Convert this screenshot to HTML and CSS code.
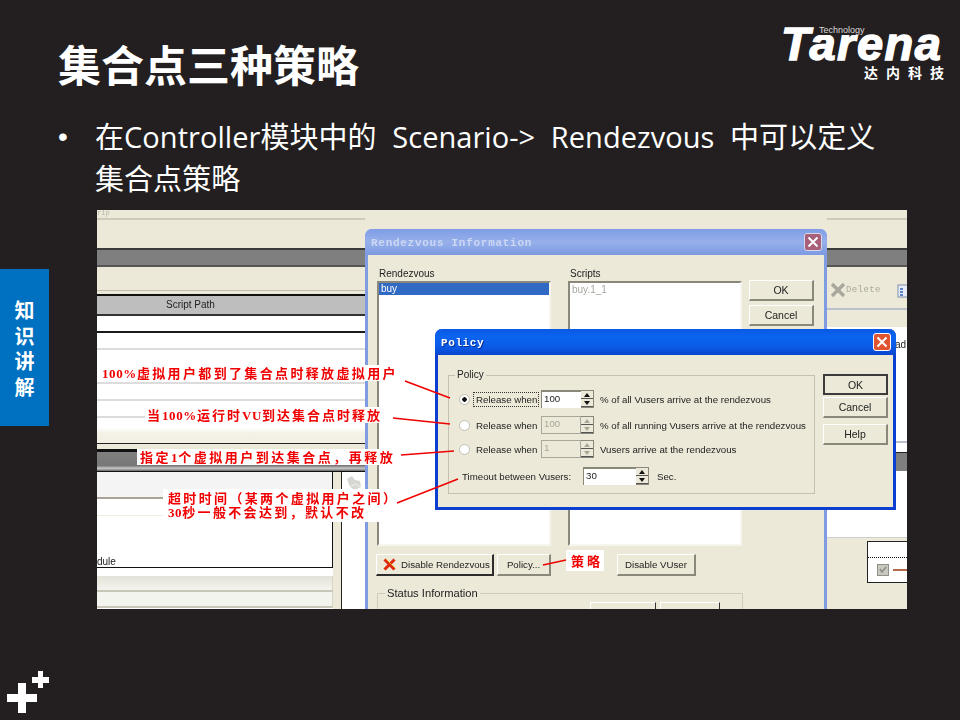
FILE: index.html
```html
<!DOCTYPE html>
<html lang="zh-CN">
<head>
    <meta charset="UTF-8">
    <meta name="viewport" content="width=device-width, initial-scale=1.0">
    <title>集合点三种策略</title>
    <link rel="stylesheet" href="styles.css">
</head>
<body>
    <div class="slide">
        <header class="top">
            <h1>集合点三种策略</h1>
            <div class="logo">
                <span class="logo-tech">Technology</span>
                <span class="logo-name">Tarena</span>
                <span class="logo-cn">达内科技</span>
            </div>
        </header>

        <div class="point">
            <span class="dot">•</span>
            <p>在Controller模块中的 Scenario-&gt; Rendezvous 中可以定义<br>集合点策略</p>
        </div>

        <div class="shot">
            <!-- application behind the dialogs -->
            <div class="back">
                <div class="back-col">
                    <div class="band rip">rip</div>
                    <div class="band rule"></div>
                    <div class="band tool"></div>
                    <div class="band grey-bar"></div>
                    <div class="band tool-low"></div>
                    <div class="band head">Script Path</div>
                    <div class="band row-a"></div>
                    <div class="band row"></div>
                    <div class="band row"></div>
                    <div class="band row"></div>
                    <div class="band row"></div>
                    <div class="band row"></div>
                    <div class="band fade"></div>
                    <div class="band grey-low"></div>
                    <div class="panels">
                        <div class="panel-left">
                            <div class="panel-box">
                                <div class="panel-line"></div>
                                <div class="panel-text">dule</div>
                            </div>
                            <div class="panel-foot"></div>
                            <div class="panel-foot low"></div>
                        </div>
                        <div class="panel-side">
                            <svg width="16" height="16" viewBox="0 0 16 16"><path d="M1 4 L6 1 L9 5 L14 6 L15 12 L9 15 L4 12 Z" fill="#d6d6d2"/><path d="M4 12 L9 9 L15 12" stroke="#eeeeea" fill="none"/></svg>
                        </div>
                    </div>
                </div>
                <div class="back-mid"></div>
                <div class="back-col">
                    <div class="band rip"></div>
                    <div class="band rule"></div>
                    <div class="band tool"></div>
                    <div class="band grey-bar"></div>
                    <div class="band toolbar">
                        <svg class="del-icon" width="16" height="16" viewBox="0 0 16 16"><path d="M2 2 L14 14 M14 2 L2 14" stroke="#a9a79c" stroke-width="3.4"/></svg>
                        <span class="del-text">Delete</span>
                        <span class="tool-sep"></span>
                        <svg class="grid-icon" width="15" height="16" viewBox="0 0 15 16"><rect x="1" y="3" width="14" height="12" fill="#e8ecf4" stroke="#8090b0"/><path d="M3 7h3M3 10h3M3 13h3" stroke="#3060b0" stroke-width="1.5"/></svg>
                    </div>
                    <div class="band blue-rule"></div>
                    <div class="band tool-b"></div>
                    <div class="band white-a">ad</div>
                    <div class="band blue-rule"></div>
                    <div class="band white-b"></div>
                    <div class="band grey-r"></div>
                    <div class="band white-c"></div>
                    <div class="legend">
                        <div class="legend-top"></div>
                        <div class="legend-row">
                            <svg class="legend-check" width="12" height="12" viewBox="0 0 12 12"><rect x="0.5" y="0.5" width="11" height="11" fill="#c8c8c0" stroke="#909088"/><path d="M3 5 L5 8 L9 3" stroke="#8a8a82" stroke-width="1.4" fill="none"/></svg>
                            <span class="legend-line"></span>
                        </div>
                    </div>
                </div>
            </div>

            <!-- inactive dialog -->
            <div class="win win-rdv">
                <div class="win-title">
                    <span>Rendezvous Information</span>
                    <span class="win-close">
                        <svg width="12" height="12" viewBox="0 0 12 12"><path d="M1.5 1.5 L10.5 10.5 M10.5 1.5 L1.5 10.5" stroke="#fff" stroke-width="2"/></svg>
                    </span>
                </div>
                <div class="rdv-body">
                    <div class="rdv-lists">
                        <div class="rdv-col">
                            <label>Rendezvous</label>
                            <div class="listbox"><div class="list-sel">buy</div></div>
                        </div>
                        <div class="rdv-col">
                            <label>Scripts</label>
                            <div class="listbox"><div class="list-off">buy.1_1</div></div>
                        </div>
                        <div class="btn-col rdv-btns">
                            <button class="btn wide">OK</button>
                            <button class="btn wide">Cancel</button>
                        </div>
                    </div>
                    <div class="rdv-actions">
                        <button class="btn act-disable">
                            <svg width="13" height="13" viewBox="0 0 13 13"><path d="M1.5 1.5 L11.5 11.5 M11.5 1.5 L1.5 11.5" stroke="#e02810" stroke-width="3"/><path d="M3 1 L12 10" stroke="#e8b020" stroke-width="1"/></svg>
                            <span>Disable Rendezvous</span>
                        </button>
                        <button class="btn act-policy">Policy...</button>
                        <button class="btn act-vuser">Disable VUser</button>
                    </div>
                    <div class="status">
                        <span class="status-label">Status Information</span>
                        <span class="status-btn one"></span>
                        <span class="status-btn two"></span>
                    </div>
                </div>
            </div>

            <!-- active dialog -->
            <div class="win win-policy">
                <div class="win-title">
                    <span>Policy</span>
                    <span class="win-close">
                        <svg width="12" height="12" viewBox="0 0 12 12"><path d="M1.5 1.5 L10.5 10.5 M10.5 1.5 L1.5 10.5" stroke="#fff" stroke-width="2"/></svg>
                    </span>
                </div>
                <div class="policy-body">
                    <fieldset class="group">
                        <legend>Policy</legend>
                        <div class="opt opt-1">
                            <span class="radio on"></span>
                            <span class="opt-label focus">Release when</span>
                            <span class="field"><span class="num">100</span></span>
                            <span class="spin"><i class="up"></i><i class="down"></i></span>
                            <span class="opt-text">% of all Vusers arrive at the rendezvous</span>
                        </div>
                        <div class="opt opt-2">
                            <span class="radio"></span>
                            <span class="opt-label">Release when</span>
                            <span class="field off"><span class="num">100</span></span>
                            <span class="spin off"><i class="up"></i><i class="down"></i></span>
                            <span class="opt-text">% of all running Vusers arrive at the rendezvous</span>
                        </div>
                        <div class="opt opt-3">
                            <span class="radio"></span>
                            <span class="opt-label">Release when</span>
                            <span class="field off"><span class="num">1</span></span>
                            <span class="spin off"><i class="up"></i><i class="down"></i></span>
                            <span class="opt-text">Vusers arrive at the rendezvous</span>
                        </div>
                        <div class="timeout">
                            <span class="timeout-label">Timeout between Vusers:</span>
                            <span class="field long"><span class="num">30</span></span>
                            <span class="spin"><i class="up"></i><i class="down"></i></span>
                            <span class="opt-text">Sec.</span>
                        </div>
                    </fieldset>
                    <div class="btn-col policy-btns">
                        <button class="btn wide default">OK</button>
                        <button class="btn wide">Cancel</button>
                        <button class="btn wide help">Help</button>
                    </div>
                </div>
            </div>

            <!-- red notes drawn over the screenshot -->
            <div class="note n1"><span class="lat">100%</span>虚拟用户都到了集合点时释放虚拟用户</div>
            <div class="note n2">当<span class="lat">100%</span>运行时<span class="lat">VU</span>到达集合点时释放</div>
            <div class="note n3">指定<span class="lat">1</span>个虚拟用户到达集合点，再释放</div>
            <div class="note n4">超时时间（某两个虚拟用户之间）<br><span class="lat">30</span>秒一般不会达到，默认不改</div>
            <div class="note n5">策略</div>
            <svg class="arrows" width="810" height="399" viewBox="0 0 810 399">
                <path d="M308 171 L353 188 M296 208 L353 214 M304 245 L357 241 M300 293 L361 269 M446 355 L469 350" stroke="#f00000" stroke-width="1.6" fill="none"/>
            </svg>
        </div>

        <div class="tag">知<br>识<br>讲<br>解</div>

        <svg class="plus" width="50" height="50" viewBox="0 0 50 50">
            <path d="M7 24h30v8H7z M18 13h8v30h-8z M32 7h17v6H32z M38 1h5v17h-5z" fill="#fff"/>
        </svg>
    </div>
</body>
</html>
```

FILE: styles.css
```css
* {
    box-sizing: border-box;
}

body {
    margin: 0;
    background: #231f20;
    font-family: "Liberation Sans", "Noto Sans CJK SC", sans-serif;
}

.slide {
    position: relative;
    width: 960px;
    height: 720px;
    overflow: hidden;
    background: #231f20;
    color: #ffffff;
}

/* title + logo */
.top {
    display: flex;
    justify-content: space-between;
    height: 112px;
    padding: 25px 16px 0 58px;
}

h1 {
    margin: 8px 0 0;
    font-family: "Noto Sans CJK SC", sans-serif;
    font-size: 43px;
    line-height: 60px;
    font-weight: 700;
}

.logo {
    position: relative;
    width: 162px;
    height: 56px;
    margin-left: -2px;
}

.logo-name {
    display: block;
    margin-left: -1px;
    font-family: "Liberation Sans", sans-serif;
    font-style: italic;
    font-weight: 700;
    font-size: 47px;
    line-height: 38px;
    letter-spacing: 1.5px;
    -webkit-text-stroke: 1.4px #ffffff;
}

.logo-tech {
    position: absolute;
    left: 36px;
    top: 0;
    font-size: 9px;
    line-height: 10px;
    color: #d8d8d8;
    background: #231f20;
    padding: 0 1px;
    z-index: 1;
}

.logo-cn {
    position: absolute;
    right: 0;
    top: 39px;
    font-family: "Noto Sans CJK SC", sans-serif;
    font-size: 14px;
    font-weight: 700;
    line-height: 16px;
    letter-spacing: 8px;
    margin-right: -8px;
}

/* bullet */
.point {
    display: flex;
    padding-left: 58px;
    height: 98px;
}

.dot {
    width: 37px;
    font-size: 28px;
    line-height: 50px;
}

.point p {
    margin: 4px 0 0;
    font-family: "Open Sans", "Noto Sans CJK SC", sans-serif;
    font-size: 29px;
    line-height: 42px;
    letter-spacing: 0.05px;
    word-spacing: 8px;
    white-space: nowrap;
}

/* the pasted screenshot, a small desktop of its own */
.shot {
    position: relative;
    width: 810px;
    height: 399px;
    margin-left: 97px;
    overflow: hidden;
    background: #ece9d8;
    color: #222222;
    font-size: 10px;
    filter: blur(0.35px);
}

.back {
    display: grid;
    grid-template-columns: 268px 462px 80px;
    height: 399px;
}

.back-col {
    display: flex;
    flex-direction: column;
    height: 399px;
}

.back-mid {
    background: #ece9d8;
}

.band {
    flex: none;
}

.rip {
    height: 8px;
    font-family: "Liberation Mono", monospace;
    font-size: 7px;
    line-height: 6px;
    color: #b8b6aa;
}

.rule {
    height: 2px;
    background: #cdcabb;
}

.tool {
    height: 28px;
    background: #ece9d8;
}

.grey-bar {
    height: 19px;
    background: #7f7f7f;
    border-top: 2px solid #3c3c3c;
    border-bottom: 2px solid #555555;
}

.tool-low {
    height: 27px;
    border-bottom: 3px solid #ece9d8;
    box-shadow: inset 0 -1px 0 #c2bfb0;
}

.head {
    height: 22px;
    background: #bebebe;
    border-top: 2px solid #111111;
    border-bottom: 2px solid #333333;
    padding-left: 69px;
    font-size: 10px;
    line-height: 18px;
}

.row-a {
    height: 17px;
    background: #ffffff;
    border-bottom: 2px solid #1a1a1a;
}

.row {
    height: 17px;
    background: #ffffff;
    border-bottom: 2px solid #dcdcdc;
}

.fade {
    height: 26px;
    background: linear-gradient(#ffffff 38%, #f4f2e6 60%, #f2f0e4);
    border-bottom: 1px solid #222222;
}

.grey-low {
    height: 28px;
    background: linear-gradient(#ece9d8 0, #ece9d8 20%, #111111 20%, #111111 28%, #808080 30%, #777777 80%, #c8c8c8 90%, #666666);
    border-bottom: 1px solid #111111;
}

.panels {
    display: flex;
    flex: 1;
}

.panel-left {
    width: 236px;
    background: #ffffff;
}

.panel-box {
    height: 96px;
    padding-top: 25px;
    background: linear-gradient(#f4f4f4 26px, #ffffff 26px);
    border-right: 1px solid #111111;
    border-bottom: 1px solid #111111;
}

.panel-line {
    width: 100%;
    height: 19px;
    border-top: 2px solid #a8a498;
    border-bottom: 1px solid #f0eee0;
    background: #ffffff;
}

.panel-text {
    margin-top: 41px;
    line-height: 10px;
}

.panel-foot {
    height: 16px;
    margin-top: 8px;
    background: linear-gradient(#e4e2d8, #f4f4ee);
    border-right: 1px solid #d8d6c8;
    border-bottom: 2px solid #c8c6b8;
}

.panel-foot.low {
    margin-top: 0;
    background: #f4f4ee;
}

.panel-side {
    flex: 1;
    background: #ffffff;
    border-left: 1px solid #222222;
    margin-left: 8px;
    padding: 3px 0 0 4px;
}

.toolbar {
    display: flex;
    align-items: center;
    height: 41px;
    padding: 4px 0 0 3px;
}

.del-icon {
    flex: none;
}

.del-text {
    font-family: "Liberation Mono", monospace;
    font-size: 9px;
    letter-spacing: 0.4px;
    color: #aaa89c;
}

.tool-sep {
    width: 1px;
    height: 16px;
    margin-left: 11px;
    background: #c4c1b2;
}

.grid-icon {
    margin-left: 5px;
    flex: none;
}

.blue-rule {
    height: 2px;
    background: #b9c2cc;
}

.tool-b {
    height: 17px;
    background: #ece9d8;
}

.white-a {
    height: 114px;
    background: #ffffff;
    padding: 12px 0 0 68px;
}

.white-b {
    height: 9px;
    background: #ffffff;
}

.grey-r {
    height: 19px;
    background: #7f7f7f;
    border-top: 1px solid #222222;
}

.white-c {
    height: 67px;
    background: #ffffff;
    border-bottom: 1px solid #cfcfcf;
}

.legend {
    width: 40px;
    height: 42px;
    margin: 3px 0 0 40px;
    background: #ffffff;
    border: 1px solid #222222;
    border-right: 0;
}

.legend-top {
    height: 16px;
    border-bottom: 1px dotted #111111;
}

.legend-row {
    display: flex;
    align-items: center;
    height: 23px;
    padding-left: 9px;
}

.legend-check {
    flex: none;
}

.legend-line {
    flex: 1;
    height: 2px;
    margin-left: 4px;
    background: #b06a48;
}

/* XP style windows */
.win {
    position: absolute;
    display: flex;
    flex-direction: column;
    background: #ece9d8;
    border-radius: 7px 7px 0 0;
}

.win-title {
    display: flex;
    justify-content: space-between;
    align-items: center;
    flex: none;
    height: 26px;
    padding: 2px 5px 0 6px;
    font-family: "Liberation Mono", monospace;
    font-weight: 700;
    font-size: 11px;
    border-radius: 7px 7px 0 0;
}

.win-close {
    display: flex;
    align-items: center;
    justify-content: center;
    width: 18px;
    height: 18px;
    margin-top: -2px;
    border: 1px solid #ffffff;
    border-radius: 3px;
}

.win-rdv {
    left: 268px;
    top: 19px;
    width: 462px;
    height: 390px;
    border: solid #7f9be2;
    border-width: 0 3px;
}

.win-rdv .win-title {
    margin: 0 -3px;
    letter-spacing: 0.72px;
    color: #ccd8f4;
    background: linear-gradient(#7f9ce6, #97b0ea 50%, #7c9ae2);
}

.win-rdv .win-close {
    background: #a8607a;
    border-color: #d8d8e8;
}

.rdv-body {
    display: flex;
    flex-direction: column;
    padding: 13px 10px 0 9px;
}

.rdv-lists {
    display: flex;
    height: 278px;
}

.rdv-col {
    display: flex;
    flex-direction: column;
    width: 191px;
}

.rdv-col label {
    height: 13px;
    line-height: 12px;
    padding-left: 2px;
}

.listbox {
    width: 174px;
    flex: 1;
    background: #ffffff;
    border: 2px solid #8a887a;
    border-right-color: #f6f5ee;
    border-bottom-color: #f6f5ee;
}

.list-sel {
    height: 12px;
    background: #316ac5;
    color: #ffffff;
    line-height: 12px;
    padding-left: 2px;
}

.list-off {
    line-height: 14px;
    padding-left: 2px;
    color: #a8a8a0;
}

.btn-col {
    display: flex;
    flex-direction: column;
}

.rdv-btns {
    gap: 4px;
    margin-left: -10px;
    padding-top: 12px;
}

.btn {
    height: 21px;
    padding: 0;
    background: #ece9d8;
    border: 1px solid #ffffff;
    border-right: 2px solid #8a887a;
    border-bottom: 2px solid #8a887a;
    color: #222222;
    font-family: "Liberation Sans", sans-serif;
    font-size: 10.5px;
    line-height: 16px;
}

.btn.wide {
    width: 65px;
}

.btn.default {
    border: 2px solid #3c3c3c;
}

.rdv-actions {
    display: flex;
    height: 22px;
    margin-top: 8px;
    margin-left: -1px;
}

.rdv-actions .btn {
    height: 22px;
    font-size: 9.7px;
    white-space: nowrap;
}

.act-disable {
    display: flex;
    align-items: center;
    gap: 5px;
    width: 118px;
    padding-left: 6px;
    border-color: #ffffff #2c2c2c #2c2c2c #ffffff;
}

.act-policy {
    width: 54px;
    margin-left: 3px;
}

.act-vuser {
    width: 79px;
    margin-left: 66px;
}

.status {
    position: relative;
    width: 366px;
    height: 30px;
    margin-top: 17px;
    border: 1px solid #cfccbd;
}

.status-label {
    position: absolute;
    left: 7px;
    top: -7px;
    padding: 0 2px;
    background: #ece9d8;
    font-size: 11.2px;
    line-height: 12px;
}

.status-btn {
    position: absolute;
    top: 8px;
    height: 20px;
    border: 1px solid #ffffff;
    border-right: 1px solid #333333;
}

.status-btn.one {
    left: 212px;
    width: 66px;
}

.status-btn.two {
    left: 282px;
    width: 60px;
}

.win-policy {
    left: 338px;
    top: 119px;
    width: 461px;
    height: 181px;
    border: solid #0a3fd0;
    border-width: 0 3px 3px;
}

.win-policy .win-title {
    margin: 0 -3px;
    color: #ffffff;
    letter-spacing: 0.6px;
    text-shadow: 1px 1px 0 #0a2c90;
    background: linear-gradient(#0a58e4, #0a64f0 30%, #0a5ae6 70%, #0a44cc);
}

.win-policy .win-close {
    background: #e05530;
}

.policy-body {
    display: flex;
    padding: 14px 8px 0 10px;
}

.group {
    flex: none;
    width: 367px;
    min-width: 0;
    height: 125px;
    margin: 0;
    padding: 0;
    border: 1px solid #c4c1b2;
    font-size: 9.7px;
}

.group legend {
    margin-left: 6px;
    padding: 0 2px;
    font-size: 10px;
    line-height: 12px;
}

.opt {
    display: flex;
    align-items: center;
    height: 18px;
    padding-left: 10px;
}

.opt-1 {
    margin-top: 9px;
}

.opt-2 {
    margin-top: 8px;
}

.opt-3 {
    margin-top: 6px;
}

.radio {
    flex: none;
    width: 11px;
    height: 11px;
    border-radius: 50%;
    background: #ffffff;
    border: 1px solid #c0c0b8;
}

.radio.on {
    background: radial-gradient(circle, #111111 0, #111111 2px, #ffffff 2.5px);
}

.opt-label {
    flex: none;
    width: 66px;
    margin-left: 3px;
    padding-left: 2px;
    line-height: 13px;
    white-space: nowrap;
    border: 1px solid transparent;
}

.opt-label.focus {
    border: 1px dotted #333333;
}

.field {
    flex: none;
    width: 40px;
    height: 18px;
    margin-left: 2px;
    padding-left: 2px;
    background: #ffffff;
    border-top: 2px solid #8a887a;
    border-left: 1px solid #8a887a;
    line-height: 14px;
}

.field.off {
    background: #ece9d8;
    color: #a8a698;
    border: 1px solid #aaa89c;
}

.field.long {
    width: 53px;
    margin-left: 12px;
}

.spin {
    display: flex;
    flex: none;
    flex-direction: column;
    width: 13px;
    height: 18px;
    border: 1px solid #8a887a;
    border-left: 0;
}

.spin i {
    flex: 1;
    position: relative;
    display: block;
    border-bottom: 1px solid #555555;
}

.spin i::after {
    content: "";
    position: absolute;
    left: 3px;
    top: 2px;
    border-left: 3px solid transparent;
    border-right: 3px solid transparent;
}

.spin .up::after {
    border-bottom: 4px solid #111111;
}

.spin .down::after {
    border-top: 4px solid #111111;
}

.spin.off .up::after {
    border-bottom-color: #aaa89c;
}

.spin.off .down::after {
    border-top-color: #aaa89c;
}

.opt-text {
    margin-left: 6px;
    white-space: nowrap;
}

.timeout {
    display: flex;
    align-items: center;
    height: 18px;
    margin-top: 9px;
    padding-left: 13px;
}

.timeout-label {
    flex: none;
    width: 109px;
    white-space: nowrap;
}

.timeout .opt-text {
    margin-left: 8px;
}

.policy-btns {
    margin-left: 8px;
    padding-top: 5px;
    gap: 2px;
}

.policy-btns .help {
    margin-top: 4px;
}

/* annotations */
.note {
    position: absolute;
    background: #ffffff;
    color: #f00000;
    font-family: "Noto Sans CJK SC", sans-serif;
    font-weight: 700;
    font-size: 13px;
    line-height: 15px;
    letter-spacing: 2.35px;
    white-space: nowrap;
}

.lat {
    font-family: "Liberation Serif", serif;
    letter-spacing: 0.6px;
}

.n1 {
    left: 0;
    top: 155px;
    padding-left: 5px;
}

.n2 {
    left: 48px;
    top: 197px;
    padding-left: 2px;
    letter-spacing: 2px;
}

.n3 {
    left: 40px;
    top: 239px;
    padding-left: 3px;
    letter-spacing: 2.5px;
}

.n4 {
    left: 66px;
    top: 279px;
    padding: 2px 3px 2px 5px;
    line-height: 14px;
}

.n5 {
    left: 469px;
    top: 340px;
    padding: 3px 1px 3px 5px;
    letter-spacing: 3px;
}

.arrows {
    position: absolute;
    left: 0;
    top: 0;
}

/* side tab and corner mark */
.tag {
    position: absolute;
    left: 0;
    top: 269px;
    width: 49px;
    height: 157px;
    padding-top: 28px;
    background: #0070c0;
    font-family: "Noto Sans CJK SC", sans-serif;
    font-size: 20px;
    font-weight: 700;
    line-height: 25.5px;
    text-align: center;
}

.plus {
    position: absolute;
    left: 0;
    top: 670px;
}
```
